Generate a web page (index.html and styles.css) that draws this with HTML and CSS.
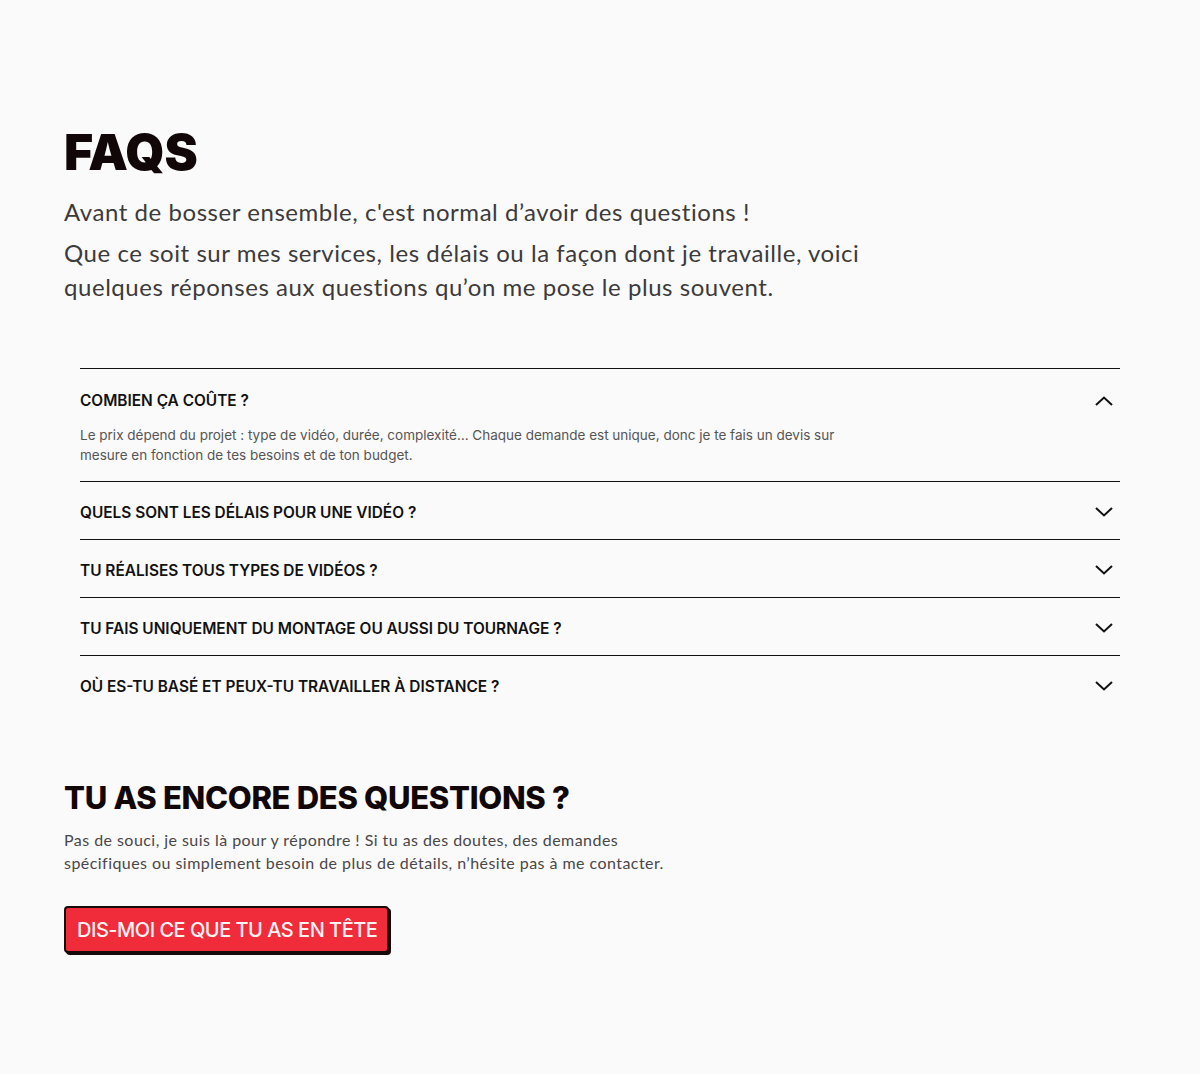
FILE: index.html
```html
<!DOCTYPE html>
<html lang="fr">
<head>
<meta charset="utf-8">
<title>FAQs</title>
<link rel="stylesheet" href="styles.css">
</head>
<body>
<main class="page">
  <section class="intro">
    <h1 class="title">FAQS</h1>
    <p class="lead">Avant de bosser ensemble, c'est normal d’avoir des questions !</p>
    <p class="lead lead-2">Que ce soit sur mes services, les délais ou la façon dont je travaille, voici quelques réponses aux questions qu’on me pose le plus souvent.</p>
  </section>

  <section class="faq">
    <div class="item open">
      <div class="q">
        <span>COMBIEN ÇA COÛTE ?</span>
        <svg class="chev" viewBox="0 0 18 10" width="18" height="10"><path d="M1 9 L9 1.5 L17 9" fill="none" stroke="#111" stroke-width="2"/></svg>
      </div>
      <p class="a">Le prix dépend du projet : type de vidéo, durée, complexité… Chaque demande est unique, donc je te fais un devis sur mesure en fonction de tes besoins et de ton budget.</p>
    </div>
    <div class="item">
      <div class="q">
        <span>QUELS SONT LES DÉLAIS POUR UNE VIDÉO ?</span>
        <svg class="chev" viewBox="0 0 18 10" width="18" height="10"><path d="M1 1 L9 8.5 L17 1" fill="none" stroke="#111" stroke-width="2"/></svg>
      </div>
    </div>
    <div class="item">
      <div class="q">
        <span>TU RÉALISES TOUS TYPES DE VIDÉOS ?</span>
        <svg class="chev" viewBox="0 0 18 10" width="18" height="10"><path d="M1 1 L9 8.5 L17 1" fill="none" stroke="#111" stroke-width="2"/></svg>
      </div>
    </div>
    <div class="item">
      <div class="q">
        <span>TU FAIS UNIQUEMENT DU MONTAGE OU AUSSI DU TOURNAGE ?</span>
        <svg class="chev" viewBox="0 0 18 10" width="18" height="10"><path d="M1 1 L9 8.5 L17 1" fill="none" stroke="#111" stroke-width="2"/></svg>
      </div>
    </div>
    <div class="item last">
      <div class="q">
        <span>OÙ ES-TU BASÉ ET PEUX-TU TRAVAILLER À DISTANCE ?</span>
        <svg class="chev" viewBox="0 0 18 10" width="18" height="10"><path d="M1 1 L9 8.5 L17 1" fill="none" stroke="#111" stroke-width="2"/></svg>
      </div>
    </div>
  </section>

  <section class="contact">
    <h2 class="subtitle">TU AS ENCORE DES QUESTIONS ?</h2>
    <p class="text">Pas de souci, je suis là pour y répondre ! Si tu as des doutes, des demandes spécifiques ou simplement besoin de plus de détails, n’hésite pas à me contacter.</p>
    <a class="btn" href="#">DIS-MOI CE QUE TU AS EN TÊTE</a>
  </section>
</main>
</body>
</html>
```

FILE: styles.css
```css
* { box-sizing: border-box; }
html, body { margin: 0; padding: 0; }
body {
  background: #fafafa;
  font-family: "Inter", "Noto Sans", sans-serif;
  color: #111;
}
.page {
  padding: 122px 64px 0 64px;
  height: 1074px;
}
.title {
  margin: 0;
  font-family: "Inter", sans-serif;
  font-weight: 900;
  font-size: 50px;
  line-height: 60px;
  letter-spacing: -0.3px;
  color: #120708;
}
.lead {
  margin: 13px 0 0 0;
  font-family: "Lato", sans-serif;
  font-weight: 400;
  font-size: 24px;
  line-height: 34px;
  letter-spacing: 0.55px;
  color: #3d3a3b;
  max-width: 820px;
}
.lead-2 { margin-top: 7px; }

.faq {
  margin: 64px 16px 0 16px;
  border-top: 1px solid #111;
}
.item {
  border-bottom: 1px solid #111;
}
.item.last { border-bottom: none; }
.q {
  display: flex;
  justify-content: space-between;
  align-items: center;
  height: 57px;
  padding-top: 3px;
  padding-right: 7px;
  font-size: 15.4px;
  font-weight: 600;
  color: #111;
}
.item.open .q { height: 63px; padding-top: 0; }
.a {
  margin: -7px 0 0 0;
  padding-bottom: 16px;
  max-width: 770px;
  font-size: 13.5px;
  line-height: 20px;
  color: #555;
}

.contact { margin-top: 65px; }
.subtitle {
  margin: 0;
  font-family: "Inter", sans-serif;
  font-weight: 800;
  font-size: 31px;
  line-height: 40px;
  letter-spacing: -0.3px;
  color: #120708;
}
.text {
  margin: 10px 0 0 0;
  max-width: 640px;
  font-family: "Lato", sans-serif;
  font-size: 16px;
  line-height: 23px;
  letter-spacing: 0.45px;
  color: #4a4748;
}
.btn {
  display: inline-block;
  margin-top: 32px;
  padding: 9px 10px 8px 11px;
  background: #f02b3a;
  border: 2px solid #160a0b;
  border-radius: 4px;
  box-shadow: 2px 2px 0 #160a0b;
  color: #fff3f4;
  font-family: "Inter", sans-serif;
  font-weight: 500;
  font-size: 20px;
  line-height: 26px;
  text-decoration: none;
  letter-spacing: -0.5px;
}
```
